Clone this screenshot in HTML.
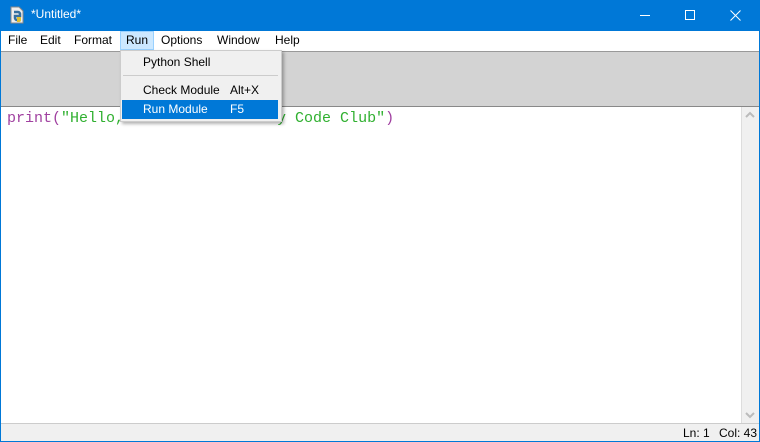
<!DOCTYPE html>
<html><head><style>
*{margin:0;padding:0;box-sizing:border-box}
body{width:760px;height:442px;position:relative;overflow:hidden;font-family:"Segoe UI","Liberation Sans",sans-serif;font-size:12px;background:#fff}
.ab{position:absolute}
</style></head><body>
<div class="ab" style="left:0;top:0;width:760px;height:442px;border:1px solid #0078d7;border-top:none"></div>
<div class="ab" style="left:0;top:0;width:760px;height:31px;background:#0078d7;color:#fff">
  <svg class="ab" style="left:8px;top:6px" width="18" height="18" viewBox="0 0 18 18"><path d="M3 1h8l4 4v12H3z" fill="#eee" stroke="#888"/><path d="M6 6h4a2 2 0 0 1 2 2v2H7v2a2 2 0 0 0 2 2" fill="none" stroke="#3670a0" stroke-width="2.5"/><path d="M9 11h4v3a2 2 0 0 1-2 2H9" fill="#e0c030"/></svg>
  <div class="ab" style="left:31px;top:7px;font-size:12px">*Untitled*</div>
  <div class="ab" style="left:640px;top:15px;width:10px;height:1px;background:#fff"></div>
  <div class="ab" style="left:685px;top:10px;width:10px;height:10px;border:1px solid #fff"></div>
  <svg class="ab" style="left:730px;top:10px" width="11" height="11"><path d="M0.5 0.5l10 10M10.5 0.5l-10 10" stroke="#fff"/></svg>
</div>
<div class="ab" style="left:1px;top:31px;width:758px;height:20px;background:#fff"></div>
<div class="ab" style="left:120px;top:31px;width:34px;height:19px;background:#cce8ff;border:1px solid #99d1ff"></div>
<div class="ab" style="top:33px;left:8px">File</div>
<div class="ab" style="top:33px;left:40px">Edit</div>
<div class="ab" style="top:33px;left:74px">Format</div>
<div class="ab" style="top:33px;left:126px">Run</div>
<div class="ab" style="top:33px;left:161px">Options</div>
<div class="ab" style="top:33px;left:217px">Window</div>
<div class="ab" style="top:33px;left:275px">Help</div>
<div class="ab" style="left:1px;top:51px;width:758px;height:56px;background:#d3d3d3;border-top:1px solid #999;border-bottom:1px solid #888"></div>
<div class="ab" style="left:1px;top:107px;width:740px;height:317px;background:#fff"></div>
<div class="ab" style="left:7px;top:110px;font-family:'Courier New','Liberation Mono',monospace;font-size:15px;white-space:pre;color:#a040a0">print(<span style="color:#30b030">"Hello, World from the my Code Club"</span>)</div>
<div class="ab" style="left:741px;top:107px;width:18px;height:317px;background:#f0f0f0;border-left:1px solid #ddd"></div>
<svg class="ab" style="left:745px;top:110px" width="10" height="10"><path d="M1 7l4-4 4 4" fill="none" stroke="#bbb" stroke-width="2"/></svg>
<svg class="ab" style="left:745px;top:410px" width="10" height="10"><path d="M1 3l4 4 4-4" fill="none" stroke="#bbb" stroke-width="2"/></svg>
<div class="ab" style="left:1px;top:423px;width:758px;height:18px;background:#f0f0f0;border-top:1px solid #ccc"></div>
<div class="ab" style="left:683px;top:426px">Ln: 1</div>
<div class="ab" style="left:719px;top:426px">Col: 43</div>
<div class="ab" style="left:120px;top:50px;width:162px;height:72px;background:#f0f0f0;border:1px solid #ccc;box-shadow:2px 2px 3px rgba(0,0,0,.3)"></div>
<div class="ab" style="left:143px;top:55px">Python Shell</div>
<div class="ab" style="left:123px;top:75px;width:155px;height:1px;background:#ccc"></div>
<div class="ab" style="left:143px;top:83px">Check Module</div>
<div class="ab" style="left:230px;top:83px">Alt+X</div>
<div class="ab" style="left:122px;top:100px;width:156px;height:19px;background:#0078d7"></div>
<div class="ab" style="left:143px;top:102px;color:#fff">Run Module</div>
<div class="ab" style="left:230px;top:102px;color:#fff">F5</div>
</body></html>
